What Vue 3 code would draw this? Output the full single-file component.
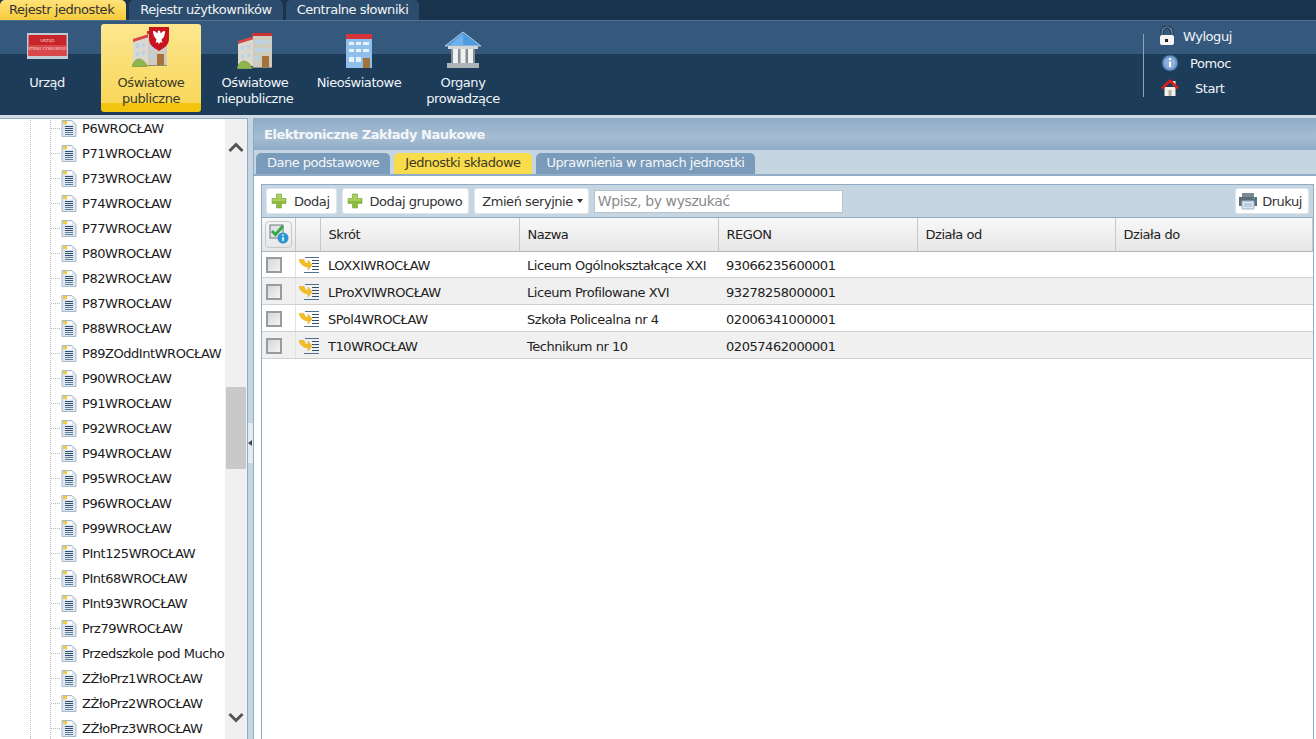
<template>
  <div class="page">
    <svg width="0" height="0" class="defs">
      <symbol id="doc" viewBox="0 0 16 17">
        <path d="M1 .5h10l4 4v12H1z" fill="#dfe6ee" stroke="#a9bacb" />
        <rect x="2" y="1" width="4" height="3" fill="#f5c93c" />
        <rect x="6" y="1.500" width="5" height="3" fill="#fff" />
        <path d="M4 6.500h8M4 8.500h8M4 10.500h8" stroke="#31506f" />
        <path d="M4 12.500h8M4 14.500h8" stroke="#5f7f9e" />
      </symbol>
      <symbol id="plus" viewBox="0 0 16 16">
        <path d="M5.500 1h5v4.500H15v5h-4.500V15h-5v-4.500H1v-5h4.500z" fill="#8cbb3c" stroke="#7aa544" stroke-width=".6" />
        <path d="M6 1.500h4V6H6zM1.500 6H14v2H1.500z" fill="#a8d05a" />
      </symbol>
      <symbol id="arrow" viewBox="0 0 20 18">
        <path d="M13 4.500h7M13 7.500h7M13 10.500h7M13 13.500h7" stroke="#31506f" stroke-width="1.200" />
        <path d="M6 1.500h14M5 16.500h15" stroke="#4f7090" stroke-width="1.200" />
        <path d="M0 3.500h5c1 3 2 4 4 4V4l4 5-4 5v-3C5 11 1 8 0 3.500z" fill="#f3bd22" stroke="#e0a416" stroke-width=".5" />
      </symbol>
      <symbol id="building" viewBox="0 0 36 36">
        <path d="M1 10 17 5h1v28H1z" fill="#dcd8ce" />
        <path d="M1 8 17 3v3L1 11z" fill="#d84444" />
        <path d="M16 3h19v31H16z" fill="#cfcbbf" />
        <path d="M15 0h20v3H15z" fill="#cc3333" />
        <path d="M4 13h3v4H4zM10 12h3v4h-3zM4 21h3v4H4zM10 20h3v4h-3zM18 7h4v4h-4zM24 7h4v4h-4zM30 7h3v4h-3zM18 15h4v4h-4zM24 15h4v4h-4zM30 15h3v4h-3zM18 23h4v4h-4z" fill="#b9d2ee" />
        <path d="M25 23h7v11h-7z" fill="#a5713a" />
        <path d="M-0 36c1-5 4-8 7-8s7 3 8 8z" fill="#8fb54f" stroke="#6e963a" stroke-width=".6" />
        <path d="M15 34h20v1H15z" fill="#8f8a7d" />
      </symbol>
    </svg>

    <div class="top-tabs">
      <span class="top-tab active">Rejestr jednostek</span>
      <span class="top-tab">Rejestr użytkowników</span>
      <span class="top-tab">Centralne słowniki</span>
    </div>

    <header class="ribbon">
      <nav class="ribbon-nav">
        <a class="ribbon-item first">
          <span class="ribbon-icon icon-sign">
            <svg width="41" height="26" viewBox="0 0 41 26">
              <rect width="41" height="26" fill="#c3ccd5" />
              <rect x="1.500" y="2" width="38" height="21" fill="#c8252b" />
              <rect x="1.500" y="12" width="38" height="11" fill="#d8474a" />
              <text x="20.500" y="9" class="sign-text">URZĄD</text>
              <text x="20.500" y="17" class="sign-text">STANU CYWILNEGO</text>
            </svg>
          </span>
          <span>Urząd</span>
        </a>
        <a class="ribbon-item selected">
          <span class="ribbon-icon crest-wrap">
            <svg width="36" height="36"><use href="#building" /></svg>
            <svg class="crest" width="22" height="24" viewBox="0 0 22 24">
              <path d="M1 0h20v12c0 6-5 9-10 12C6 21 1 18 1 12z" fill="#c8141e" />
              <path d="M11 3.500c1 0 1.500.8 1.200 1.800l.8 1c1-2 3-2.500 4-2.300 0 4-1 7-3.500 8.500l1 3.500-2-1-1.500 2-1.500-2-2 1 1-3.500C6 10 5 7 5 4c1-.2 3 .3 4 2.300l.8-1C9.500 4.300 10 3.500 11 3.500z" fill="#fff" />
            </svg>
          </span>
          <span>Oświatowe<br />publiczne</span>
        </a>
        <a class="ribbon-item">
          <span class="ribbon-icon"><svg width="36" height="36"><use href="#building" /></svg></span>
          <span>Oświatowe<br />niepubliczne</span>
        </a>
        <a class="ribbon-item">
          <span class="ribbon-icon">
            <svg width="28" height="36" viewBox="0 0 28 36">
              <rect x="1" y="1" width="26" height="34" fill="#8fc0ec" />
              <rect x="1" y="1" width="26" height="5" fill="#d7353a" />
              <path d="M4 9h5v3H4zM11 9h5v3h-5zM18 9h6v3h-6zM4 16h5v3H4zM11 16h5v3h-5zM18 16h6v3h-6zM4 24h5v5H4zM11 24h5v5h-5z" fill="#e8f2fb" />
              <rect x="18" y="25" width="7" height="10" fill="#a5713a" />
            </svg>
          </span>
          <span>Nieoświatowe</span>
        </a>
        <a class="ribbon-item">
          <span class="ribbon-icon">
            <svg width="38" height="38" viewBox="0 0 38 38">
              <path d="M19 1 37 15H1z" fill="#4d9be0" stroke="#b9c6d2" />
              <path d="M19 3 6 14h13z" fill="#6db2ee" />
              <path d="M4 15h30v3H4z" fill="#d2d5d6" />
              <path d="M7 18h24v14H7z" fill="#858c90" />
              <path d="M9 18h5v14H9zM16.500 18h5v14h-5zM24 18h5v14h-5z" fill="#eef1f2" />
              <path d="M3 32h32v5H3z" fill="#aeb3b5" />
            </svg>
          </span>
          <span>Organy<br />prowadzące</span>
        </a>
      </nav>
      <div class="ribbon-links">
        <a class="link link-a">
          <svg width="18" height="20" viewBox="0 0 18 20">
            <path d="M4 10V6a5 5 0 0 1 10 0v4" fill="none" stroke="#122c44" stroke-width="3" />
            <path d="M4 10V6a5 5 0 0 1 10 0v4" fill="none" stroke="#8498aa" stroke-width="1.200" />
            <rect x="2" y="9" width="14" height="10" rx="2" fill="#f5f5f5" />
            <rect x="7" y="13" width="3" height="3" fill="#222" />
          </svg>
          <span>Wyloguj</span>
        </a>
        <a class="link link-b">
          <svg width="18" height="18" viewBox="0 0 18 18">
            <circle cx="9" cy="9" r="8" fill="#6d97cb" stroke="#2f5580" />
            <circle cx="9" cy="9" r="5.500" fill="#8fb0da" />
            <path d="M8 4h2v2H8zM8 7.500h2V13H8z" fill="#fff" />
          </svg>
          <span>Pomoc</span>
        </a>
        <a class="link link-c">
          <svg width="18" height="18" viewBox="0 0 18 18">
            <path d="M3.500 8h11v9h-11z" fill="#f3f0ea" />
            <path d="M7.500 11h3v6h-3z" fill="#b9b2a6" />
            <path d="M12 2h2.500v5H12z" fill="#e6e2da" />
            <path d="M.8 9.500 9 1.800l8.200 7.700" fill="none" stroke="#e01b1b" stroke-width="2.500" />
          </svg>
          <span>Start</span>
        </a>
      </div>
    </header>

    <main class="body">
      <aside class="tree-panel">
        <div class="tree">
          <div class="tree-lines"></div>
          <div v-for="name in units" :key="name" class="tree-row">
            <span class="dots"></span>
            <svg width="16" height="17" class="doc"><use href="#doc" /></svg>
            <span class="tree-name">{{ name }}</span>
          </div>
        </div>
        <div class="scrollbar">
          <svg class="chev" width="16" height="11" viewBox="0 0 16 11"><path d="M1.500 9 8 2.500 14.500 9" fill="none" stroke="#555" stroke-width="3" /></svg>
          <div class="thumb"></div>
          <svg class="chev chev-down" width="16" height="11" viewBox="0 0 16 11"><path d="M1.500 2 8 8.500 14.500 2" fill="none" stroke="#555" stroke-width="3" /></svg>
        </div>
      </aside>

      <div class="splitter">
        <div class="grip"><i></i></div>
      </div>

      <section class="content">
        <h2 class="title">Elektroniczne Zakłady Naukowe</h2>
        <div class="tabs">
          <span class="tab">Dane podstawowe</span>
          <span class="tab active">Jednostki składowe</span>
          <span class="tab">Uprawnienia w ramach jednostki</span>
        </div>
        <div class="tab-body">
          <div class="grid-box">
            <div class="toolbar">
              <button class="btn"><svg width="16" height="16"><use href="#plus" /></svg>Dodaj</button>
              <button class="btn"><svg width="16" height="16"><use href="#plus" /></svg>Dodaj grupowo</button>
              <button class="btn btn-text">Zmień seryjnie <i class="caret"></i></button>
              <input class="search" placeholder="Wpisz, by wyszukać" />
              <button class="btn print">
                <svg width="20" height="18" viewBox="0 0 20 18">
                  <path d="M4 1h12v4H4z" fill="#7c8a96" />
                  <path d="M1 5h18v9H1z" fill="#5f6e7b" />
                  <path d="M4 9h12v8H4z" fill="#dce7f1" stroke="#9db3c7" />
                  <path d="M6 12h8M6 14h8" stroke="#9db3c7" />
                  <path d="M15 6h2v1h-2z" fill="#5ec46a" />
                </svg>
                Drukuj
              </button>
            </div>
            <table class="grid">
              <colgroup>
                <col class="c-check" /><col class="c-act" />
                <col class="c-wide" /><col class="c-wide" /><col class="c-wide" />
                <col class="c-narrow" /><col />
              </colgroup>
              <thead>
                <tr>
                  <th class="head-check">
                    <span class="check-all">
                      <svg width="20" height="20" viewBox="0 0 20 20">
                        <rect x="1" y="1" width="13" height="13" fill="#dfe3e6" stroke="#6b7680" />
                        <path d="M3 7l3.500 3.500L14 2" fill="none" stroke="#3aa84a" stroke-width="3" />
                        <circle cx="14" cy="14" r="5.500" fill="#2d96d2" />
                        <path d="M13.300 10.500h1.500v1.500h-1.500zM13.300 13h1.500v4h-1.500z" fill="#fff" />
                      </svg>
                    </span>
                  </th>
                  <th></th>
                  <th>Skrót</th>
                  <th>Nazwa</th>
                  <th>REGON</th>
                  <th>Działa od</th>
                  <th>Działa do</th>
                </tr>
              </thead>
              <tbody>
                <tr v-for="row in rows" :key="row.code">
                  <td class="cell-check"><span class="box"></span></td>
                  <td class="cell-act"><svg width="20" height="18"><use href="#arrow" /></svg></td>
                  <td>{{ row.code }}</td>
                  <td>{{ row.name }}</td>
                  <td>{{ row.regon }}</td>
                  <td></td>
                  <td></td>
                </tr>
              </tbody>
            </table>
          </div>
        </div>
      </section>
    </main>
  </div>
</template>

<script setup>
const units = [
  'P6WROCŁAW', 'P71WROCŁAW', 'P73WROCŁAW', 'P74WROCŁAW', 'P77WROCŁAW', 'P80WROCŁAW',
  'P82WROCŁAW', 'P87WROCŁAW', 'P88WROCŁAW', 'P89ZOddIntWROCŁAW', 'P90WROCŁAW', 'P91WROCŁAW',
  'P92WROCŁAW', 'P94WROCŁAW', 'P95WROCŁAW', 'P96WROCŁAW', 'P99WROCŁAW', 'PInt125WROCŁAW',
  'PInt68WROCŁAW', 'PInt93WROCŁAW', 'Prz79WROCŁAW', 'Przedszkole pod Muchomorkiem',
  'ZŻłoPrz1WROCŁAW', 'ZŻłoPrz2WROCŁAW', 'ZŻłoPrz3WROCŁAW',
]

const rows = [
  { code: 'LOXXIWROCŁAW', name: 'Liceum Ogólnokształcące XXI', regon: '93066235600001' },
  { code: 'LProXVIWROCŁAW', name: 'Liceum Profilowane XVI', regon: '93278258000001' },
  { code: 'SPol4WROCŁAW', name: 'Szkoła Policealna nr 4', regon: '02006341000001' },
  { code: 'T10WROCŁAW', name: 'Technikum nr 10', regon: '02057462000001' },
]
</script>

<style scoped>
.page {
  width: 1316px;
  height: 739px;
  overflow: hidden;
  display: flex;
  flex-direction: column;
  font-family: "DejaVu Sans", Verdana, sans-serif;
  font-size: 13px;
  letter-spacing: -0.45px;
  color: #1a1a1a;
  background: #c6d5e2;
}
.defs { position: absolute; }

.top-tabs {
  height: 20px;
  background: #1a334d;
  display: flex;
  gap: 3px;
  flex-shrink: 0;
}
.top-tab {
  height: 20px;
  padding: 0 11px;
  line-height: 20px;
  color: #f2f5f8;
  background: #2b4c6c;
  border-radius: 5px 5px 0 0;
}
.top-tab.active {
  padding: 0 12px 0 9px;
  color: #333;
  background: linear-gradient(#ffe27a, #f6cb3a);
}

.ribbon {
  height: 95px;
  flex-shrink: 0;
  display: flex;
  justify-content: space-between;
  background: linear-gradient(#35597c 0, #35597c 33px, #1d3c59 33px, #1d3c59 100%);
  border-top: 1px solid #4d6f90;
  box-sizing: border-box;
}
.ribbon-nav {
  display: flex;
  gap: 4px;
  padding-top: 3px;
}
.ribbon-item {
  width: 100px;
  height: 88px;
  border-radius: 3px;
  box-sizing: border-box;
  display: flex;
  flex-direction: column;
  align-items: center;
  color: #f0f4f8;
  text-align: center;
  line-height: 16px;
}
.ribbon-item.first { width: 94px; margin-right: 3px; }
.ribbon-item.selected {
  color: #3d3a25;
  background: linear-gradient(#fde78f, #f8d75a 90%, #f2c40f 90%);
}
.ribbon-icon {
  height: 45px;
  display: flex;
  align-items: flex-end;
  justify-content: center;
  margin-bottom: 6px;
  flex-shrink: 0;
  position: relative;
  box-sizing: border-box;
}
.icon-sign { padding-bottom: 10px; }
.crest-wrap { width: 38px; justify-content: flex-start; padding-bottom: 2px; }
.crest { position: absolute; top: 3px; right: 0; }
.sign-text {
  font-size: 4px;
  fill: #f4d4d4;
  text-anchor: middle;
  letter-spacing: 0;
}

.ribbon-links {
  width: 172px;
  margin-top: 13px;
  height: 63px;
  border-left: 1px solid #8ea3b6;
  color: #f0f4f8;
  flex-shrink: 0;
}
.link {
  display: flex;
  align-items: center;
  height: 18px;
}
.link-a { padding-left: 14px; margin-top: -7px; gap: 7px; }
.link-b { padding-left: 17px; margin-top: 9px; gap: 11px; }
.link-c { padding-left: 17px; margin-top: 7px; gap: 16px; }

.body {
  flex: 1;
  min-height: 0;
  display: flex;
  border-top: 3px solid #cfdae4;
}
.tree-panel {
  width: 248px;
  flex-shrink: 0;
  display: flex;
  background: #fff;
  border-top: 1px solid #8fabc5;
  border-right: 1px solid #8fabc5;
  box-sizing: border-box;
  overflow: hidden;
}
.tree {
  width: 225px;
  flex-shrink: 0;
  position: relative;
  overflow: hidden;
  margin-top: -3px;
}
.tree-lines {
  position: absolute;
  left: 30px;
  top: 0;
  bottom: 0;
  width: 19px;
  border-left: 1px dotted #bbb;
  border-right: 1px dotted #bbb;
}
.tree-row {
  height: 25px;
  display: flex;
  align-items: center;
  padding-left: 51px;
  position: relative;
  white-space: nowrap;
}
.dots {
  width: 9px;
  border-top: 1px dotted #bbb;
  flex-shrink: 0;
}
.doc { flex-shrink: 0; margin: -1px 5px 0 1px; }
.tree-name { flex-shrink: 0; }
.scrollbar {
  flex: 1;
  background: #f0f0f0;
  position: relative;
}
.chev { position: absolute; left: 3px; top: 23px; }
.chev-down { top: auto; bottom: 16px; }
.thumb {
  position: absolute;
  left: 1px;
  right: 1px;
  top: 268px;
  height: 82px;
  background: #c8c8c8;
}

.splitter {
  width: 6px;
  flex-shrink: 0;
  background: #c6d5e2;
  border-right: 1px solid #8fabc5;
  box-sizing: border-box;
  display: flex;
  align-items: center;
}
.grip {
  width: 5px;
  height: 40px;
  background: #e6ebef;
  display: flex;
  align-items: center;
  position: relative;
  top: 14px;
}
.grip i {
  border: 3px solid transparent;
  border-right: 4px solid #444;
  border-left: 0;
}

.content {
  flex: 1;
  min-width: 0;
  display: flex;
  flex-direction: column;
}
.title {
  margin: 0;
  height: 32px;
  padding: 5px 0 0 10px;
  box-sizing: border-box;
  font-size: 13px;
  font-weight: bold;
  letter-spacing: -0.44px;
  line-height: 24px;
  color: #f4f7fa;
  background: linear-gradient(#8eabc6, #a5bdd3 60%, #8fabc5);
}
.tabs {
  height: 26px;
  flex-shrink: 0;
  display: flex;
  gap: 4px;
  padding: 3px 0 0 2px;
  box-sizing: border-box;
  background: #c6d5e2;
  border-bottom: 2px solid #8fabc5;
}
.tab {
  width: fit-content;
  height: 21px;
  padding: 0 11px 0 11px;
  line-height: 20px;
  letter-spacing: -0.5px;
  color: #f4f7fa;
  background: #7a9bb9;
  border-radius: 5px 5px 0 0;
}
.tab.active {
  color: #3d3a25;
  background: #f9dc4c;
}
.tab-body {
  flex: 1;
  min-height: 0;
  background: #fff;
  padding: 8px 2px 0 7px;
}
.grid-box {
  height: 100%;
  border: 1px solid #8fabc5;
  border-bottom: 0;
  box-sizing: border-box;
}
.toolbar {
  height: 32px;
  display: flex;
  align-items: center;
  gap: 5px;
  padding: 0 4px;
  background: #c6d5e2;
  border-bottom: 1px solid #8fabc5;
}
.btn {
  height: 26px;
  display: flex;
  align-items: center;
  gap: 7px;
  padding: 0 6px 0 4px;
  border: 1px solid #dfe6ec;
  border-radius: 3px;
  background: #fff;
  font: inherit;
  letter-spacing: inherit;
  color: #333;
}
.btn-text { padding: 0 5px 0 7px; gap: 4px; }
.caret {
  border: 3px solid transparent;
  border-top: 4px solid #333;
  border-bottom: 0;
}
.search {
  width: 249px;
  height: 23px;
  box-sizing: border-box;
  padding: 0 3px;
  border: 1px solid #b8c4ce;
  font: inherit;
  font-size: 14px;
  letter-spacing: -0.4px;
  background: #fff;
}
.search::placeholder { color: #8a8a8a; opacity: 1; }
.print { margin-left: auto; gap: 4px; padding-left: 2px; }

.grid {
  width: 100%;
  border-collapse: collapse;
  table-layout: fixed;
}
.c-check { width: 33px; }
.c-act { width: 25px; }
.c-wide { width: 199px; }
.c-narrow { width: 198px; }
.grid th {
  height: 33px;
  padding: 0 8px;
  box-sizing: border-box;
  text-align: left;
  font-weight: normal;
  color: #222;
  background: linear-gradient(#f8f8f8, #e6e6e6);
  border-right: 1px solid #c8c8c8;
  border-bottom: 1px solid #b5b5b5;
}
.grid td {
  height: 26.75px;
  padding: 3px 8px 0;
  box-sizing: border-box;
  border-bottom: 1px solid #cfcfcf;
  white-space: nowrap;
  overflow: hidden;
  color: #222;
}
.grid tbody tr:nth-child(even) td { background: #f0f0f0; }
.grid .head-check { padding: 0 0 0 3px; }
.check-all {
  width: 27px;
  height: 27px;
  display: flex;
  align-items: center;
  justify-content: center;
  border: 1px solid #c8c8c8;
  border-radius: 4px;
  box-sizing: border-box;
}
.grid .cell-check { padding: 2px 0 0 4px; }
.grid .cell-act { padding: 2px 0 0 3px; border-left: 1px solid #e2e2e2; }
.cell-act svg { display: block; }
.box {
  display: block;
  width: 16px;
  height: 16px;
  box-sizing: border-box;
  background: linear-gradient(135deg, #d6d6d6, #f4f4f4);
  border: 2px solid #9b9b9b;
}
</style>

<style>
body { background: #c6d5e2; }
</style>
